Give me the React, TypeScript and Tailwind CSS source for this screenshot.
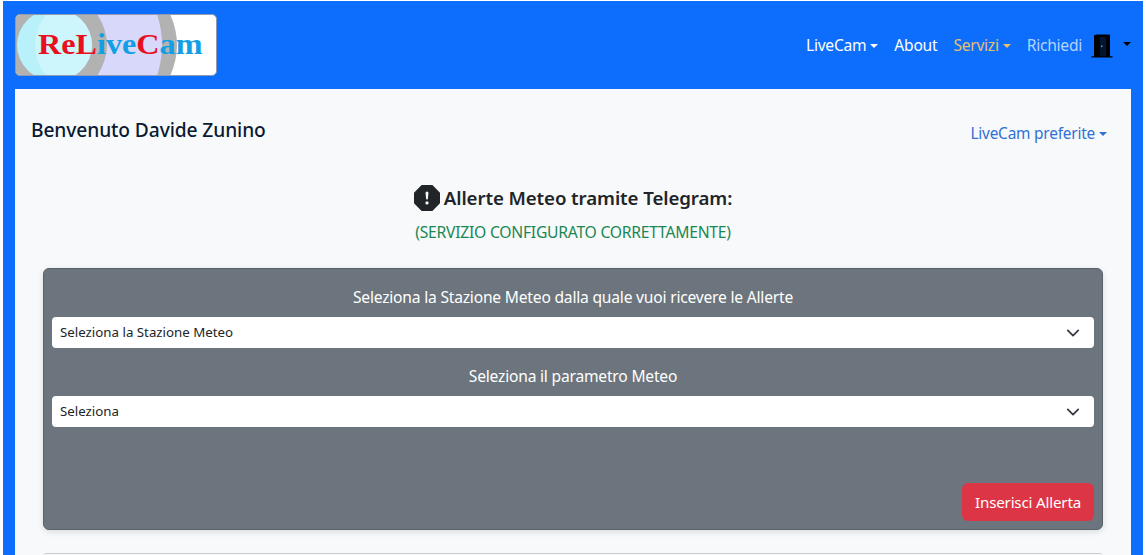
import React from "react";

function Caret({ className = "" }: { className?: string }) {
  return <span className={`inline-block w-0 h-0 ml-[4px] border-t-[4.8px] border-x-[4.8px] border-x-transparent border-t-current align-[3px] ${className}`} />;
}

function Logo() {
  return (
    <div className="relative w-[202px] h-[62px] rounded-[5px] border border-[#8f9bb0] overflow-hidden bg-white">
      <svg width="200" height="60" viewBox="0 0 200 60" className="block">
        <defs>
          <clipPath id="cy">
            <ellipse cx="38.5" cy="30" rx="37.5" ry="36" />
          </clipPath>
        </defs>
        <path d="M0 -1 L154 -1 Q168 30 154 61 L0 61 Z" fill="#b2b2b2" />
        <path d="M81 -1 L141 -1 Q151 30 141 61 L81 61 Q101 30 81 -1Z" fill="#d8d8fa" />
        <ellipse cx="38.5" cy="30" rx="37.5" ry="36" fill="#b9f1fa" />
        <g clipPath="url(#cy)">
          <ellipse cx="48" cy="30" rx="29" ry="38" fill="#ccf5fc" />
        </g>
      </svg>
      <div className="absolute left-[22px] top-[12px] text-[29px] leading-[34px] font-bold whitespace-nowrap origin-left scale-x-[1.11] font-['Liberation_Serif',serif]">
        <span className="text-[#e8101c]">ReL</span>
        <span className="text-[#139fe4]">ive</span>
        <span className="text-[#e8101c]">C</span>
        <span className="text-[#139fe4]">am</span>
      </div>
    </div>
  );
}

function Door() {
  return (
    <svg width="22" height="24" viewBox="0 0 22 24" className="block">
      <path d="M0.5 23.5h21v-1.2h-2.5V0.8L16 0.5H6L3 1.2V22.3H0.5z" fill="#000" />
      <path d="M9 3h6v19.3h-6z" fill="#04152f" />
      <rect x="10" y="11.5" width="1.5" height="1.6" fill="#6b8fd0" />
    </svg>
  );
}

function Select({ label }: { label: string }) {
  return (
    <div className="flex items-center justify-between h-[31px] bg-white rounded-[4px] pl-[8px] pr-[14px] text-[13.3px] text-[#212529]">
      <span>{label}</span>
      <svg width="14" height="14" viewBox="0 0 16 16" fill="none" stroke="#343a40" strokeWidth="2" strokeLinecap="round" strokeLinejoin="round">
        <path d="M2 5l6 6 6-6" />
      </svg>
    </div>
  );
}

export default function App() {
  return (
    <div className="h-[555px] overflow-hidden bg-white px-[3px] pt-[1px] font-['Noto_Sans',sans-serif]">
      <div className="h-[554px] bg-[#0d6efd] px-[12px] flex flex-col">
        <nav className="h-[88px] shrink-0 flex items-start justify-between">
          <div className="pt-[13px]"><Logo /></div>
          <div className="flex items-center h-[28px] mt-[31px] text-[15.6px] tracking-[-0.25px]">
            <span className="text-white">LiveCam<Caret /></span>
            <span className="text-white ml-[16px]">About</span>
            <span className="text-[#e6c06a] ml-[16px]">Servizi<Caret /></span>
            <span className="text-[#b6d4fe] ml-[16px]">Richiedi</span>
            <span className="ml-[9px] mb-[1px]"><Door /></span>
            <span className="text-black ml-[6px] mb-[5px]"><Caret /></span>
          </div>
        </nav>
        <main className="flex-1 bg-[#f8f9fa] pt-[27px]">
          <div className="flex items-start justify-between pl-[16px] pr-[24px]">
            <h1 className="text-[19.2px] leading-[28px] font-medium text-[#0b1a33] tracking-[-0.1px]">Benvenuto Davide Zunino</h1>
            <span className="text-[15.4px] leading-[24px] mt-[6px] text-[#2f6fd6] tracking-[-0.2px]">LiveCam preferite<Caret /></span>
          </div>
          <div className="mt-[39px] flex items-center justify-center gap-[4px] text-[#212529]">
            <svg width="26" height="26" viewBox="0 0 16 16" fill="#212529">
              <path d="M11.46.146A.5.5 0 0 0 11.107 0H4.893a.5.5 0 0 0-.353.146L.146 4.54A.5.5 0 0 0 0 4.893v6.214a.5.5 0 0 0 .146.353l4.394 4.394a.5.5 0 0 0 .353.146h6.214a.5.5 0 0 0 .353-.146l4.394-4.394a.5.5 0 0 0 .146-.353V4.893a.5.5 0 0 0-.146-.353L11.46.146zM8 4c.535 0 .954.462.9.995l-.35 3.507a.552.552 0 0 1-1.1 0L7.1 4.995A.905.905 0 0 1 8 4zm.002 6a1 1 0 1 1 0 2 1 1 0 0 1 0-2z" />
            </svg>
            <h2 className="text-[18.7px] leading-[26px] font-semibold tracking-[-0.1px]">Allerte Meteo tramite Telegram:</h2>
          </div>
          <p className="mt-[10px] text-center text-[15.7px] leading-[22px] text-[#198754] tracking-[-0.25px]">(SERVIZIO CONFIGURATO CORRETTAMENTE)</p>
          <section className="mx-[28px] mt-[25px] h-[262px] bg-[#6c757d] rounded-[6px] border border-[#5b636a] shadow-[0_2px_6px_rgba(0,0,0,0.12)] px-[8px] flex flex-col">
            <p className="mt-[17px] text-center text-white text-[15.6px] leading-[22px] tracking-[-0.2px]">Seleziona la Stazione Meteo dalla quale vuoi ricevere le Allerte</p>
            <div className="mt-[9px]"><Select label="Seleziona la Stazione Meteo" /></div>
            <p className="mt-[17px] text-center text-white text-[15.6px] leading-[22px] tracking-[-0.2px]">Seleziona il parametro Meteo</p>
            <div className="mt-[9px]"><Select label="Seleziona" /></div>
            <div className="mt-auto mb-[8px] flex justify-end">
              <button className="h-[38px] w-[132px] rounded-[6px] bg-[#dc3545] text-white text-[15.2px] tracking-[-0.2px]">Inserisci Allerta</button>
            </div>
          </section>
          <div className="mx-[28px] mt-[23px] h-[4px] border-t border-[#c9ccd0] rounded-t-[6px]" />
        </main>
      </div>
    </div>
  );
}
